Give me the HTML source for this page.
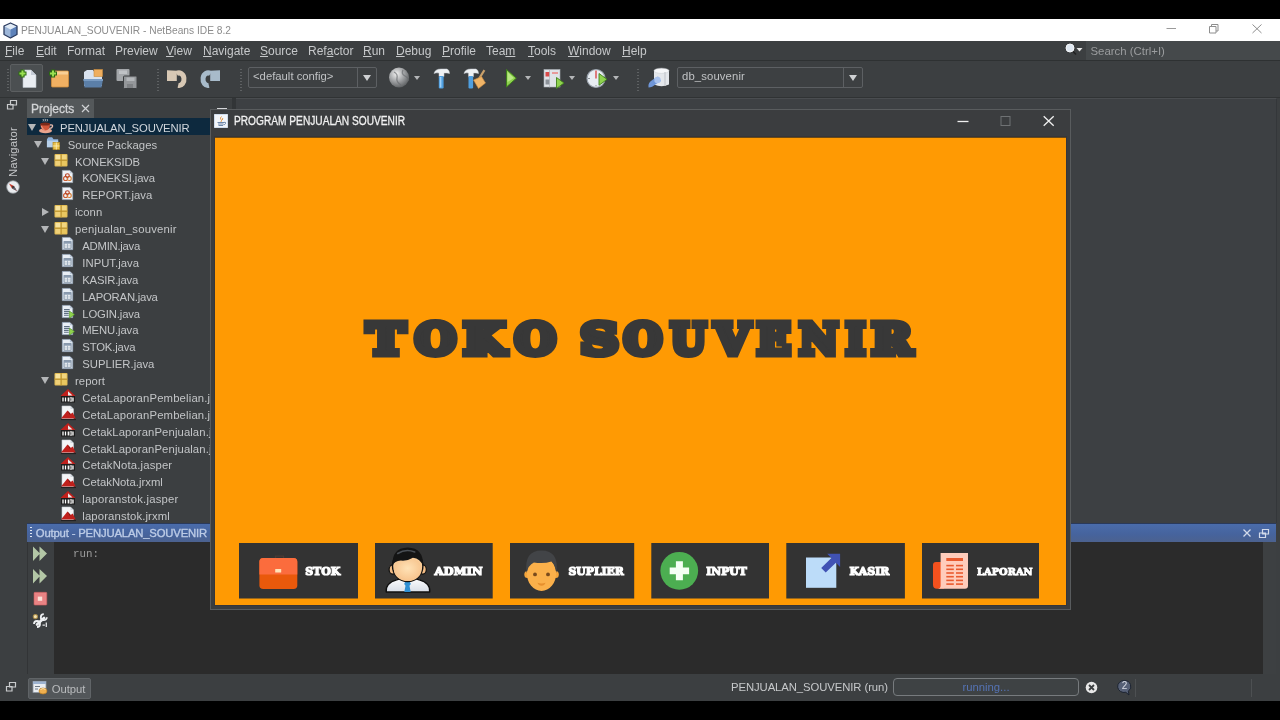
<!DOCTYPE html>
<html lang="id">
<head>
<meta charset="utf-8">
<title>PENJUALAN_SOUVENIR - NetBeans IDE 8.2</title>
<style>
*{box-sizing:border-box;margin:0;padding:0}
html,body{width:1280px;height:720px;overflow:hidden;background:#000}
body{position:relative;font-family:"Liberation Sans",sans-serif;font-size:12px;color:#bbbdbf}
.abs{position:absolute}
svg{position:absolute;overflow:visible}
#ide{left:0;top:19px;width:1280px;height:682px;background:#3c3f41}
#wtitle{left:0;top:19px;width:1280px;height:22px;background:#fff;color:#8c8c8c;font-size:11.5px;line-height:22px}
#wtitle .t{left:21px;top:-.5px;white-space:nowrap;font-size:11.3px;transform-origin:0 50%;transform:scaleX(.904)}
#menubar{left:0;top:41px;width:1280px;height:20px;background:#3c3f41;color:#c6c8ca;font-size:12px;line-height:19px;border-bottom:1px solid #2e3132}
#menubar span{position:absolute;top:1px;white-space:nowrap}
#menubar u{text-decoration-thickness:1px;text-underline-offset:1px}
#search{left:1086px;top:41px;width:194px;height:19px;background:#45494b;color:#9b9d9f;font-size:11.4px;line-height:21px;padding-left:4.5px}
#toolbar{left:0;top:61px;width:1280px;height:37px;background:#3c3f41;border-bottom:1px solid #303334}
.combo{position:absolute;height:21px;border:1px solid #5d6063;border-radius:2px;background:#3d4042;color:#c0c2c4;font-size:11.3px;line-height:17.500px;padding-left:4px;white-space:nowrap}
.combo i{position:absolute;right:0;top:0;width:19px;height:19px;border-left:1px solid #5d6063}
.combo i:after{content:"";position:absolute;left:5px;top:7px;border:4px solid transparent;border-top:6px solid #cfd1d3;border-bottom:0}
.dd{position:absolute;width:0;height:0;border:3px solid transparent;border-top:4px solid #b4b6b8;border-bottom:0}
.grip{position:absolute;width:2px;height:23px;background:repeating-linear-gradient(to bottom,#5e6163 0 1px,transparent 1px 3px)}
.tri-d{position:absolute;width:0;height:0;border:4.5px solid transparent;border-top:7px solid #b4b6b8;border-bottom:0}
.tri-r{position:absolute;width:0;height:0;border:4.5px solid transparent;border-left:7px solid #b4b6b8;border-right:0}
#tree{left:27px;top:118px;width:185px;height:406px;background:#3c3f41;overflow:hidden;color:#c3c5c7;font-size:11.3px}
.row{position:absolute;left:0;height:17px;line-height:17px;white-space:nowrap;width:185px}
.row span{position:absolute;top:1.7px}
.row svg{top:0}
#status{left:0;top:674px;width:1280px;height:27px;background:#3c3f41;color:#c4c6c8;font-size:12px}
</style>
</head>
<body>
<div id="wrap" class="abs" style="left:0;top:0;width:1280px;height:720px;will-change:transform">
<div id="ide" class="abs"></div>
<div id="wtitle" class="abs">
  <svg style="left:3px;top:3px" width="15" height="17" viewBox="0 0 15 17"><path d="M7.5 1 L14 4 V12.5 L7.5 16 L1 12.5 V4 Z" fill="#9db6d8"/><path d="M7.5 7.4 L14 4 V12.5 L7.5 16 Z" fill="#5d82ba"/><path d="M7.5 7.4 L1 4 L7.5 1 L14 4 Z" fill="#e1ebf6"/><path d="M7.5 1 L14 4 V12.5 L7.5 16 L1 12.5 V4 Z" fill="none" stroke="#2c3c60" stroke-width="1.3" stroke-linejoin="round"/></svg>
  <span class="abs t">PENJUALAN_SOUVENIR - NetBeans IDE 8.2</span>
  <svg style="left:1160px;top:0" width="110" height="22" viewBox="1160 19 110 22"><path d="M1166.5 28.5H1176" stroke="#9a9a9a" stroke-width="1" fill="none"/><path d="M1209.5 26.5h6.5v6.5h-6.5zM1211.5 26.5v-2h6.5v6.5h-2" stroke="#8e8e8e" stroke-width="1" fill="none"/><path d="M1252.5 24.5l9 8.5M1261.5 24.5l-9 8.5" stroke="#8e8e8e" stroke-width="1" fill="none"/></svg>
</div>
<div id="menubar" class="abs">
  <span style="left:5px"><u>F</u>ile</span>
  <span style="left:36px"><u>E</u>dit</span>
  <span style="left:67px">Format</span>
  <span style="left:115px">Preview</span>
  <span style="left:166px"><u>V</u>iew</span>
  <span style="left:203px"><u>N</u>avigate</span>
  <span style="left:260px"><u>S</u>ource</span>
  <span style="left:308px">Ref<u>a</u>ctor</span>
  <span style="left:363px"><u>R</u>un</span>
  <span style="left:396px"><u>D</u>ebug</span>
  <span style="left:442px"><u>P</u>rofile</span>
  <span style="left:486px">Tea<u>m</u></span>
  <span style="left:528px"><u>T</u>ools</span>
  <span style="left:568px"><u>W</u>indow</span>
  <span style="left:622px"><u>H</u>elp</span>
</div>
<svg style="left:1064px;top:42px" width="22" height="16" viewBox="0 0 22 16"><circle cx="6" cy="6" r="4" fill="#dfe8f2" stroke="#f4f6f8" stroke-width="1"/><path d="M9 9.5l3 3" stroke="#222" stroke-width="1.6"/><path d="M12.5 6h6l-3 3.5z" fill="#e6e6e6"/></svg>
<div id="search" class="abs">Search (Ctrl+I)</div>
<div id="toolbar" class="abs"></div>
<div class="grip" style="left:7px;top:69px"></div>
<div class="grip" style="left:157px;top:69px"></div>
<div class="grip" style="left:240px;top:69px"></div>
<div class="grip" style="left:637px;top:69px"></div>
<div class="abs" style="left:10px;top:64px;width:33px;height:28px;background:#4b4f51;border:1px solid #5c5f61;border-radius:2px"></div>
<svg style="left:0;top:61px" width="700" height="37" viewBox="0 61 700 37">
  <!-- new file -->
  <path d="M23 70h8l5 5v12.5h-13z" fill="#e9edf2" stroke="#b9c0c8" stroke-width=".6"/><path d="M31 70v5h5z" fill="#c5ccd6"/>
  <path d="M22.5 69.5v8M18.5 73.5h8" stroke="#2c6b12" stroke-width="4.2"/><path d="M22.5 70.5v6M19.500 73.5h6" stroke="#9be052" stroke-width="2"/>
  <!-- new project -->
  <rect x="51.5" y="71" width="17" height="16" rx="1" fill="#f0b062" stroke="#d18f3e" stroke-width=".8"/><rect x="52" y="71.500" width="16" height="3" fill="#f8cf95"/>
  <path d="M53 69.500v8M49 73.500h8" stroke="#2c6b12" stroke-width="4.2"/><path d="M53 70.500v6M50 73.500h6" stroke="#9be052" stroke-width="2"/>
  <!-- open project -->
  <path d="M84 72l3-2h6l2 3h7v13h-18z" fill="#d9e2ee"/><rect x="94" y="69.500" width="8.5" height="7" fill="#efae5e" stroke="#c98c3f" stroke-width=".6"/>
  <path d="M83.500 79h19.500l-1.500 8.500h-17z" fill="#5b7fa8"/><path d="M83.500 79h19.500v2h-19.500z" fill="#7a9cc3"/>
  <!-- save all -->
  <rect x="116.500" y="69" width="13" height="12" rx="1" fill="#a4a7aa"/><rect x="119" y="70.500" width="8" height="3.500" fill="#bfc2c5"/>
  <rect x="123.500" y="76" width="13.500" height="12.500" rx="1" fill="#94979a" stroke="#3c3f41" stroke-width="1"/><rect x="126.500" y="77.500" width="8" height="3.500" fill="#b4b7ba"/><rect x="127" y="84" width="6" height="4" fill="#7e8184"/>
  <!-- undo -->
  <path d="M176.500 73.740A5 6.300 0 1 1 178.130 85.400" fill="none" stroke="#d8c8b4" stroke-width="5"/><path d="M167 70.300l9.800 .5v10.200h-9.800z" fill="#d8c8b4"/>
  <!-- redo -->
  <path d="M210.500 73.740A5 6.300 0 1 0 208.870 85.400" fill="none" stroke="#a8bbca" stroke-width="5"/><path d="M220 70.300l-9.800 .5v10.200h9.800z" fill="#a8bbca"/>
  <!-- globe -->
  <defs><radialGradient id="gl" cx=".38" cy=".32" r=".75"><stop offset="0" stop-color="#f2f2f2"/><stop offset=".45" stop-color="#a9abad"/><stop offset="1" stop-color="#55585a"/></radialGradient></defs>
  <circle cx="399" cy="77.500" r="10" fill="url(#gl)"/><path d="M394 72q4 2 3 6t4 7M403 70q-2 4 2 6t3 5" stroke="#6b6e70" stroke-width="1.300" fill="none" opacity=".7"/>
  <!-- hammer -->
  <path d="M434 73.500q1-4.500 7-4.500h6q2.500 1 2.500 4.500l-2.500-.5h-3v3.500h-5v-3.500q-3-.5-5 .5z" fill="#eef1f4" stroke="#c9ced4" stroke-width=".5"/><rect x="438.800" y="76" width="4.800" height="12.500" rx="1.200" fill="#4f9fe0"/><rect x="439.800" y="77" width="1.600" height="10.500" fill="#9fd0f7"/>
  <!-- clean and build -->
  <path d="M464 73.500q1-4.500 7-4.500h5q2.500 1 2.500 4.500l-2.500-.5h-2.500v3.500h-5v-3.500q-2.500-.5-4.500 .5z" fill="#eef1f4" stroke="#c9ced4" stroke-width=".5"/><rect x="468.500" y="76" width="4.600" height="12.500" rx="1.200" fill="#4f9fe0"/>
  <path d="M483.500 69.500l1.800 1.200-5 8-1.800-1.200z" fill="#c9a06a"/><path d="M473.500 80l8-3.500 4 6.500-7 5.500z" fill="#f0b467" stroke="#c98c3f" stroke-width=".6"/>
  <!-- run -->
  <path d="M506.500 69.500l9.800 8.700-9.800 8.800z" fill="#8fd24e" stroke="#3f7f1c" stroke-width="1"/><path d="M507.500 72l6.500 6-6.500 4z" fill="#c3ee92" opacity=".8"/>
  <!-- debug -->
  <rect x="544" y="69.500" width="16" height="17.500" fill="#dfe3e8" stroke="#a9afb6" stroke-width=".6"/><rect x="545.500" y="72" width="4" height="4.500" fill="#d94a4a"/><rect x="552" y="72" width="6" height="2" fill="#e79a9a"/><rect x="545.500" y="79.500" width="4" height="5" fill="#8c9299"/><path d="M549.500 69.500v18" stroke="#a9afb6" stroke-width=".6"/>
  <path d="M556.500 77.500l7.500 5.500-7.500 5.500z" fill="#8fd24e" stroke="#3f7f1c" stroke-width=".9"/>
  <!-- profile -->
  <circle cx="596" cy="78.500" r="9" fill="#e8edf2" stroke="#9aa3ad" stroke-width="1.200"/><path d="M596 70.500v8" stroke="#d94a4a" stroke-width="1.400"/><path d="M588 78.500h2M596 86.500v-1.500" stroke="#8c9299" stroke-width="1"/>
  <path d="M599 73.500l8 5.800-8 6z" fill="#8fd24e" stroke="#3f7f1c" stroke-width=".9"/>
  <!-- db -->
  <path d="M654 70.500q7.500-3.500 15 0v14q-7.500 3.500-15 0z" fill="#e4e7eb"/><ellipse cx="661.500" cy="70.800" rx="7.500" ry="2.600" fill="#f6f7f9" stroke="#c4c8cd" stroke-width=".5"/><path d="M665 72v14" stroke="#c9cdd2" stroke-width="2" opacity=".7"/>
  <path d="M648.500 87.500q-1-5 4.500-8l5-3 3 4.500-5 3q-4 3.500-7.500 3.500z" fill="#6f96d8"/><circle cx="657.500" cy="80" r="3.200" fill="#a9c3ee"/>
</svg>
<div class="combo" style="left:248px;top:67px;width:129px">&lt;default config&gt;<i></i></div>
<div class="combo" style="left:677px;top:67px;width:186px;letter-spacing:.13px">db_souvenir<i></i></div>
<div class="dd" style="left:414px;top:76px"></div>
<div class="dd" style="left:525px;top:76px"></div>
<div class="dd" style="left:569px;top:76px"></div>
<div class="dd" style="left:613px;top:76px"></div>
<svg width="0" height="0" style="left:0;top:0"><defs>
<symbol id="i-proj" viewBox="0 0 16 16"><path d="M5 1q1 1.200 0 2.400M7 .8q1 1.200 0 2.600M9 1q1 1.200 0 2.400" stroke="#d8d8d8" stroke-width=".8" fill="none"/><ellipse cx="7.500" cy="12.800" rx="6.500" ry="2.500" fill="#e8a58f"/><path d="M2.500 6h9.500q0 6-4.800 6.500q-4.700-.5-4.700-6.500z" fill="#d2573a"/><ellipse cx="7.200" cy="6" rx="4.800" ry="1.500" fill="#7a2a1a"/><path d="M12 7q3-.5 2.500 1.500t-3.300 1.800" stroke="#e7bcae" stroke-width="1.300" fill="none"/><path d="M3.500 8q.5 3 3 3.800" stroke="#f1a48f" stroke-width="1" fill="none"/></symbol>
<symbol id="i-src" viewBox="0 0 16 16"><path d="M1 4.500l1.500-2h4l1.500 2h5v8.500h-12z" fill="#8fb3dc"/><path d="M1 6h12v7h-12z" fill="#b7d0ea"/><rect x="7.500" y="8" width="7" height="7.500" fill="#e9c04c" stroke="#b98e1f" stroke-width=".8"/><path d="M11 8v7.500M7.500 11.700h7" stroke="#fdf0b8" stroke-width=".9"/></symbol>
<symbol id="i-pkg" viewBox="0 0 16 16"><rect x="1.500" y="2" width="13" height="12.500" rx="1" fill="#e3bd55"/><rect x="2.500" y="3" width="5" height="4.500" fill="#f7e3a0"/><rect x="8.800" y="3" width="4.700" height="4.500" fill="#f1d57f"/><rect x="2.500" y="9" width="5" height="4.500" fill="#efd078"/><rect x="8.800" y="9" width="4.700" height="4.500" fill="#e9c760"/><path d="M8.100 2v12.500M1.500 8.200h13" stroke="#b88f2a" stroke-width="1"/></symbol>
<symbol id="i-jcls" viewBox="0 0 16 16"><path d="M2.500 1.500h8l3 3v10h-11z" fill="#eef2f7" stroke="#aab4c0" stroke-width=".7"/><path d="M10.500 1.500v3h3z" fill="#c3ccd8"/><circle cx="6" cy="10" r="2.200" fill="none" stroke="#c95a32" stroke-width="1.200"/><circle cx="9.800" cy="10" r="2.200" fill="none" stroke="#d9823c" stroke-width="1.200"/><circle cx="7.900" cy="7" r="2" fill="none" stroke="#b8452c" stroke-width="1.200"/></symbol>
<symbol id="i-form" viewBox="0 0 16 16"><path d="M2.500 1.500h8l3 3v10h-11z" fill="#e9eff6" stroke="#9fb0c4" stroke-width=".8"/><path d="M10.500 1.500v3h3z" fill="#b9c7d8"/><rect x="4.300" y="6" width="7.500" height="7" fill="#f9fbfd" stroke="#6f8296" stroke-width=".9"/><path d="M4.300 8.300h7.500M4.300 10.600h7.500M8 8.300v4.700" stroke="#8a9bb0" stroke-width=".7"/><rect x="4.300" y="6" width="7.500" height="2" fill="#8a9bb0"/></symbol>
<symbol id="i-formrun" viewBox="0 0 16 16"><path d="M2.500 1.500h8l3 3v10h-11z" fill="#e9eff6" stroke="#9fb0c4" stroke-width=".8"/><path d="M10.500 1.500v3h3z" fill="#b9c7d8"/><path d="M4.300 6h6M4.300 8h6M4.300 10h5M4.300 12h5" stroke="#5e6f82" stroke-width="1.100"/><path d="M10 7.500l5.500 3.800-5.500 3.800z" fill="#8fd24e" stroke="#4c8c22" stroke-width=".6"/></symbol>
<symbol id="i-jasper" viewBox="0 0 16 16"><path d="M8 1l7.500 7h-15z" fill="#c0201c"/><path d="M8 3.200l4.500 4.300h-4.500z" fill="#e9e9e9"/><rect x="1" y="8" width="14" height="6.500" fill="#1b1b1b"/><path d="M3 9.500v4M5.500 9.500v4M8.300 9.500v4M13 9.500v4" stroke="#fff" stroke-width="1.300"/><rect x="10" y="9.800" width="1.800" height="3.400" fill="none" stroke="#fff" stroke-width=".8"/></symbol>
<symbol id="i-jrxml" viewBox="0 0 16 16"><path d="M2 1h8.500l3 3v10.500h-11.500z" fill="#f4f5f7" stroke="#c7ccd3" stroke-width=".6"/><path d="M10.500 1v3h3z" fill="#cfd5dd"/><path d="M1 13.500l6.500-8 3.200 3.500 2-1.500 3 6z" fill="#c0201c"/><path d="M7.500 5.500l3.200 3.500-1 .8z" fill="#7d1411"/><path d="M1 14.500h15" stroke="#222" stroke-width="1.200"/></symbol>
</defs></svg>
<!-- left slide bar -->
<svg style="left:5px;top:99px" width="14" height="12" viewBox="0 0 14 12"><path d="M5.500 1.500h6v4.500h-6zM2.500 5.500h5.500v4.500h-5.500z" fill="#3c3f41" stroke="#c9cbcd" stroke-width="1.200"/></svg>
<div class="abs" style="left:5px;top:176.800px;width:60px;height:16px;line-height:16px;font-size:11.300px;letter-spacing:.18px;color:#c3c5c7;transform-origin:0 0;transform:rotate(-90deg);white-space:nowrap">Navigator</div>
<svg style="left:6px;top:180px" width="14" height="14" viewBox="0 0 14 14"><circle cx="7" cy="7" r="6.300" fill="#e9ecef" stroke="#8f959b" stroke-width=".8"/><path d="M3 3.500l5 2.500 3 5-5-2.500z" fill="#c0392b"/><path d="M8 6l3 5-5-2.500z" fill="#5a6570"/><circle cx="7" cy="7" r="1" fill="#333"/></svg>
<!-- projects tab -->
<div class="abs" style="left:27px;top:98px;width:206px;height:20px;background:#3c3f41;border-top:1px solid #45484a"></div>
<div class="abs" style="left:27px;top:99px;width:67px;height:19px;background:#54585a;color:#cfd1d3;font-size:12px;line-height:21px;padding-left:4px;white-space:nowrap"><span style="-webkit-text-stroke:.3px #d3d5d7">Projects</span><svg style="left:54px;top:5px" width="9" height="9" viewBox="0 0 9 9"><path d="M1 1l7 7M8 1l-7 7" stroke="#d0d2d4" stroke-width="1.200"/></svg></div>
<div class="abs" style="left:217px;top:107.600px;width:10px;height:1.200px;background:#d4d6d8"></div>
<div class="abs" style="left:232px;top:98px;width:4px;height:426px;background:#323537"></div>
<div id="tree" class="abs">
<div class="row" style="top:0.2px;background:#0d293e;color:#d0d6dc"><i class="tri-d" style="left:1px;top:6px"></i><svg style="left:11.0px" width="16" height="16"><use href="#i-proj" width="16" height="16"/></svg><span style="left:33.0px;letter-spacing:-0.125px">PENJUALAN_SOUVENIR</span></div>
<div class="row" style="top:17.1px"><i class="tri-d" style="left:7px;top:6px"></i><svg style="left:18.5px" width="15" height="15"><use href="#i-src" width="15" height="15"/></svg><span style="left:40.7px;letter-spacing:0.070px">Source Packages</span></div>
<div class="row" style="top:34.0px"><i class="tri-d" style="left:14px;top:6px"></i><svg style="left:26.0px" width="16" height="16"><use href="#i-pkg" width="16" height="16"/></svg><span style="left:48.0px;letter-spacing:-0.100px">KONEKSIDB</span></div>
<div class="row" style="top:50.8px"><svg style="left:33.0px" width="15" height="15"><use href="#i-jcls" width="15" height="15"/></svg><span style="left:55.3px;letter-spacing:-0.116px">KONEKSI.java</span></div>
<div class="row" style="top:67.7px"><svg style="left:33.0px" width="15" height="15"><use href="#i-jcls" width="15" height="15"/></svg><span style="left:55.3px;letter-spacing:0.047px">REPORT.java</span></div>
<div class="row" style="top:84.6px"><i class="tri-r" style="left:15px;top:5px"></i><svg style="left:26.0px" width="16" height="16"><use href="#i-pkg" width="16" height="16"/></svg><span style="left:48.0px;letter-spacing:0.057px">iconn</span></div>
<div class="row" style="top:101.5px"><i class="tri-d" style="left:14px;top:6px"></i><svg style="left:26.0px" width="16" height="16"><use href="#i-pkg" width="16" height="16"/></svg><span style="left:48.0px;letter-spacing:0.206px">penjualan_souvenir</span></div>
<div class="row" style="top:118.4px"><svg style="left:33.0px" width="15" height="15"><use href="#i-form" width="15" height="15"/></svg><span style="left:55.3px;letter-spacing:-0.257px">ADMIN.java</span></div>
<div class="row" style="top:135.2px"><svg style="left:33.0px" width="15" height="15"><use href="#i-form" width="15" height="15"/></svg><span style="left:55.3px;letter-spacing:0.018px">INPUT.java</span></div>
<div class="row" style="top:152.1px"><svg style="left:33.0px" width="15" height="15"><use href="#i-form" width="15" height="15"/></svg><span style="left:55.3px;letter-spacing:-0.207px">KASIR.java</span></div>
<div class="row" style="top:169.0px"><svg style="left:33.0px" width="15" height="15"><use href="#i-form" width="15" height="15"/></svg><span style="left:55.3px;letter-spacing:-0.205px">LAPORAN.java</span></div>
<div class="row" style="top:185.9px"><svg style="left:33.0px" width="15" height="15"><use href="#i-formrun" width="15" height="15"/></svg><span style="left:55.3px;letter-spacing:-0.133px">LOGIN.java</span></div>
<div class="row" style="top:202.8px"><svg style="left:33.0px" width="15" height="15"><use href="#i-formrun" width="15" height="15"/></svg><span style="left:55.3px;letter-spacing:-0.125px">MENU.java</span></div>
<div class="row" style="top:219.6px"><svg style="left:33.0px" width="15" height="15"><use href="#i-form" width="15" height="15"/></svg><span style="left:55.3px;letter-spacing:-0.158px">STOK.java</span></div>
<div class="row" style="top:236.5px"><svg style="left:33.0px" width="15" height="15"><use href="#i-form" width="15" height="15"/></svg><span style="left:55.3px;letter-spacing:-0.018px">SUPLIER.java</span></div>
<div class="row" style="top:253.4px"><i class="tri-d" style="left:14px;top:6px"></i><svg style="left:26.0px" width="16" height="16"><use href="#i-pkg" width="16" height="16"/></svg><span style="left:48.0px;letter-spacing:0.081px">report</span></div>
<div class="row" style="top:270.3px"><svg style="left:33.0px" width="16" height="16"><use href="#i-jasper" width="16" height="16"/></svg><span style="left:55.3px;letter-spacing:0.165px">CetaLaporanPembelian.jasper</span></div>
<div class="row" style="top:287.2px"><svg style="left:33.0px" width="16" height="16"><use href="#i-jrxml" width="16" height="16"/></svg><span style="left:55.3px;letter-spacing:0.165px">CetaLaporanPembelian.jrxml</span></div>
<div class="row" style="top:304.0px"><svg style="left:33.0px" width="16" height="16"><use href="#i-jasper" width="16" height="16"/></svg><span style="left:55.3px;letter-spacing:0.101px">CetakLaporanPenjualan.jasper</span></div>
<div class="row" style="top:320.9px"><svg style="left:33.0px" width="16" height="16"><use href="#i-jrxml" width="16" height="16"/></svg><span style="left:55.3px;letter-spacing:0.101px">CetakLaporanPenjualan.jrxml</span></div>
<div class="row" style="top:337.8px"><svg style="left:33.0px" width="16" height="16"><use href="#i-jasper" width="16" height="16"/></svg><span style="left:55.3px;letter-spacing:0.170px">CetakNota.jasper</span></div>
<div class="row" style="top:354.7px"><svg style="left:33.0px" width="16" height="16"><use href="#i-jrxml" width="16" height="16"/></svg><span style="left:55.3px;letter-spacing:0.016px">CetakNota.jrxml</span></div>
<div class="row" style="top:371.6px"><svg style="left:33.0px" width="16" height="16"><use href="#i-jasper" width="16" height="16"/></svg><span style="left:55.3px;letter-spacing:0.216px">laporanstok.jasper</span></div>
<div class="row" style="top:388.4px"><svg style="left:33.0px" width="16" height="16"><use href="#i-jrxml" width="16" height="16"/></svg><span style="left:55.3px;letter-spacing:0.136px">laporanstok.jrxml</span></div>
</div>
<!-- editor area -->
<div class="abs" style="left:236px;top:98px;width:1041px;height:425px;background:#3d4043;border-top:1px solid #4a4d50;border-right:1px solid #34373a"></div>
<!-- output -->
<div class="abs" style="left:27px;top:523px;width:1249px;height:19px;background:linear-gradient(#4a6cab 0%,#46639c 60%,#4c628f 100%);border-top:1px solid #2a3a5c"></div>
<div class="abs" style="left:30px;top:527px;width:2px;height:12px;background:repeating-linear-gradient(to bottom,#dfe6f2 0 1px,transparent 1px 3px)"></div>
<div class="abs" style="left:35.800px;top:524px;height:18px;line-height:18px;font-size:11.300px;color:#bccbe6;white-space:nowrap;-webkit-text-stroke:.35px #bccbe6;letter-spacing:-.17px">Output - PENJUALAN_SOUVENIR</div>
<svg style="left:1240px;top:526px" width="32" height="14" viewBox="1240 526 32 14"><path d="M1243.500 529.500l7 7M1250.500 529.500l-7 7" stroke="#d2daea" stroke-width="1.300"/><path d="M1262.500 529.500h6v4.500h-6zM1259.500 533h6v4.500h-6z" fill="#4562a0" stroke="#d2daea" stroke-width="1.200"/></svg>
<div class="abs" style="left:27px;top:542px;width:1249px;height:132px;background:#2b2b2b"></div>
<div class="abs" style="left:27px;top:542px;width:27px;height:132px;background:#3c3f41;border-left:1px solid #323436"></div>
<div class="abs" style="left:1263px;top:542px;width:13px;height:132px;background:#3d4042"></div>
<svg style="left:27px;top:542px" width="28" height="92" viewBox="27 542 28 92">
  <path d="M33 546.500l7 7-7 7.500zM39.500 546.500l7.500 7-7.500 7.500z" fill="#b3c7a6"/>
  <path d="M33 569l7 7-7 7.500zM39.500 569l7.500 7-7.500 7.500z" fill="#b3c7a6"/>
  <rect x="34" y="592.300" width="12.800" height="12.800" rx=".8" fill="#e98384" stroke="#c95a5c" stroke-width=".6"/><rect x="37.800" y="596.600" width="4.400" height="4.200" fill="#fbe0d8"/>
  <path d="M37 624.500l7-6.500" stroke="#eef0f2" stroke-width="2.600" stroke-linecap="round"/>
  <path d="M46.800 617.200a3 3 0 1 1-3-3" fill="none" stroke="#eef0f2" stroke-width="1.800"/>
  <path d="M34 624a3 3 0 1 1 3 3" fill="none" stroke="#eef0f2" stroke-width="1.800"/>
  <circle cx="35.400" cy="616.600" r="2.100" fill="#f3e2b0" stroke="#a88b4a" stroke-width="1.100"/>
  <path d="M42.500 625.200h2.400M46.300 622.500v4.500" stroke="#e4e6e8" stroke-width="1.300"/>
</svg>
<div class="abs" style="left:73px;top:546px;height:16px;line-height:16px;font-family:'Liberation Mono',monospace;font-size:10.800px;color:#9c9c9c;white-space:nowrap">run:</div>
<!-- status bar -->
<div id="status" class="abs"></div>
<svg style="left:4px;top:681px" width="14" height="12" viewBox="0 0 14 12"><path d="M5.500 1.500h6v4.500h-6zM2.500 5.500h5.500v4.500h-5.500z" fill="#3c3f41" stroke="#c9cbcd" stroke-width="1.200"/></svg>
<div class="abs" style="left:28px;top:678px;width:63px;height:21px;background:#53575a;border:1px solid #606467;border-radius:2px"></div>
<svg style="left:32px;top:680px" width="16" height="16" viewBox="0 0 16 16"><rect x="1" y="1.500" width="13" height="11" fill="#e9edf2" stroke="#8d96a1" stroke-width=".8"/><rect x="1" y="1.500" width="13" height="2.500" fill="#9db3d1"/><path d="M3 6.500h5M3 9h3" stroke="#6f7a87" stroke-width="1"/><ellipse cx="11" cy="11" rx="4" ry="3" fill="#f0b04f" stroke="#b97d22" stroke-width=".7"/><path d="M8.500 9.500q2.500-2 5 0" stroke="#fbe2b0" stroke-width="1" fill="none"/></svg>
<div class="abs" style="left:51.800px;top:680.500px;height:17px;line-height:17px;font-size:11.300px;color:#b9bbbd;white-space:nowrap;letter-spacing:-.07px">Output</div>
<div class="abs" style="left:731px;top:678px;height:18px;line-height:18px;font-size:11.300px;color:#c6c8ca;white-space:nowrap;letter-spacing:-.08px">PENJUALAN_SOUVENIR (run)</div>
<div class="abs" style="left:893px;top:678px;width:186px;height:18px;border:1px solid #777b7e;border-radius:4px;background:#3e4244;text-align:center;line-height:16px;font-size:11.300px;color:#5573b4">running...</div>
<svg style="left:1085px;top:681px" width="13" height="13" viewBox="0 0 13 13"><circle cx="6.500" cy="6.500" r="5.800" fill="#e8e8e8"/><path d="M4 4l5 5M9 4l-5 5" stroke="#3c3f41" stroke-width="1.800"/></svg>
<svg style="left:1116px;top:679px" width="17" height="17" viewBox="0 0 17 17"><path d="M8.300 1.500a6.500 6 0 1 0 1.500 11.800l3.200 2.700-.6-3.800a6.500 6 0 0 0-4.100-10.700z" fill="#566076" stroke="#1c2330" stroke-width="1"/></svg>
<div class="abs" style="left:1116px;top:679px;width:17px;height:14px;line-height:14px;text-align:center;font-size:10px;color:#d9dde6">2</div>
<div class="abs" style="left:1135px;top:679px;width:1px;height:18px;background:#4d5052"></div>
<div class="abs" style="left:1251px;top:679px;width:1px;height:18px;background:#4d5052"></div>
<!-- application window -->
<div class="abs" style="left:210px;top:109px;width:861px;height:501px;background:#3b3d3f;border:1px solid #595c5e"></div>
<div class="abs" style="left:214px;top:136px;width:853px;height:470px;background:#36363a"></div>
<svg style="left:214px;top:114px" width="14" height="14" viewBox="0 0 14 14"><rect width="14" height="14" rx="1" fill="#f3f6fa"/><rect x=".5" y=".5" width="13" height="13" rx="1" fill="none" stroke="#cfdcec" stroke-width="1"/><path d="M7.500 2.500q-2 1.500-.5 3t-.3 2.500M9 4q-1.200 1 -.3 2" stroke="#e0903a" stroke-width=".9" fill="none"/><path d="M3.500 8.500h6.500M4 10h5.500M4.500 11.500h4.500" stroke="#4a6a94" stroke-width=".8"/><path d="M10 8.300q2.200-.3 1.500 1.200t-2 1.300" stroke="#4a6a94" stroke-width=".8" fill="none"/></svg>
<div class="abs" style="left:233.700px;top:111.500px;height:18px;line-height:18px;font-size:12.500px;color:#f1f1f1;white-space:nowrap;transform-origin:0 50%;transform:scaleX(.813);-webkit-text-stroke:.3px #f1f1f1">PROGRAM PENJUALAN SOUVENIR</div>
<svg style="left:950px;top:110px" width="115" height="26" viewBox="950 110 115 26"><path d="M957.500 121.500h11" stroke="#f0f0f0" stroke-width="1.300"/><rect x="1001" y="116.500" width="9" height="9" fill="none" stroke="#6f7274" stroke-width="1"/><path d="M1043.700 116.200l10 9.600M1053.700 116.200l-10 9.600" stroke="#f0f0f0" stroke-width="1.300"/></svg>
<svg style="left:215px;top:137px" width="851" height="468" viewBox="215 137 851 468">
<rect x="215" y="137" width="851" height="1" fill="#6b4a16"/>
<rect x="215" y="138" width="851" height="467" fill="#ff9a03"/>
<text y="354.4" font-family="DejaVu Serif, Liberation Serif, serif" font-weight="bold" font-size="43.5" fill="#383838" stroke="#383838" stroke-width="7.0" stroke-linejoin="miter" stroke-miterlimit="4"><tspan x="367.1" textLength="37.90" lengthAdjust="spacingAndGlyphs">T</tspan><tspan x="415.1" textLength="40.93" lengthAdjust="spacingAndGlyphs">O</tspan><tspan x="463.6" textLength="41.57" lengthAdjust="spacingAndGlyphs">K</tspan><tspan x="514.7" textLength="40.93" lengthAdjust="spacingAndGlyphs">O</tspan><tspan x="565.0"> </tspan><tspan x="580.5" textLength="37.96" lengthAdjust="spacingAndGlyphs">S</tspan><tspan x="623.7" textLength="38.17" lengthAdjust="spacingAndGlyphs">O</tspan><tspan x="670.6" textLength="35.53" lengthAdjust="spacingAndGlyphs">U</tspan><tspan x="714.8" textLength="35.11" lengthAdjust="spacingAndGlyphs">V</tspan><tspan x="756.9" textLength="33.54" lengthAdjust="spacingAndGlyphs">E</tspan><tspan x="799.2" textLength="38.92" lengthAdjust="spacingAndGlyphs">N</tspan><tspan x="845.8" textLength="19.46" lengthAdjust="spacingAndGlyphs">I</tspan><tspan x="871.8" textLength="40.37" lengthAdjust="spacingAndGlyphs">R</tspan></text>
<g fill="#333333">
<rect x="239" y="543" width="119" height="55.500"/><rect x="375" y="543" width="117.700" height="55.500"/><rect x="510" y="543" width="124.200" height="55.500"/><rect x="651.300" y="543" width="117.700" height="55.500"/><rect x="786.300" y="543" width="118.600" height="55.500"/><rect x="922" y="543" width="117" height="55.500"/>
</g>
<g font-family="DejaVu Serif, Liberation Serif, serif" font-weight="bold" fill="#ffffff" stroke="#ffffff" stroke-linejoin="miter">
<text x="305.2" y="575.3" font-size="11.39" stroke-width="1.2" textLength="35.2" lengthAdjust="spacingAndGlyphs">STOK</text>
<text x="434.6" y="575.3" font-size="11.39" stroke-width="1.2" textLength="47.9" lengthAdjust="spacingAndGlyphs">ADMIN</text>
<text x="568.5" y="575.3" font-size="11.39" stroke-width="1.2" textLength="55.3" lengthAdjust="spacingAndGlyphs">SUPLIER</text>
<text x="706.2" y="575.3" font-size="11.39" stroke-width="1.2" textLength="40.7" lengthAdjust="spacingAndGlyphs">INPUT</text>
<text x="849.6" y="575.3" font-size="11.39" stroke-width="1.2" textLength="39.8" lengthAdjust="spacingAndGlyphs">KASIR</text>
<text x="977.1" y="575.1" font-size="9.19" stroke-width="0.9" textLength="55.5" lengthAdjust="spacingAndGlyphs">LAPORAN</text>
</g>
<!--ICONS-->
<!-- stok -->
<path d="M275.500 558v-1.800h8v1.800" fill="none" stroke="#4a3a34" stroke-width="1.200"/>
<rect x="259.400" y="558" width="37.900" height="31" rx="3.800" fill="#e9590b"/>
<path d="M259.400 574.400v-12.600a3.800 3.800 0 0 1 3.800-3.800h30.300a3.800 3.800 0 0 1 3.800 3.800v12.600z" fill="#fb6c3d"/>
<rect x="275.200" y="569" width="6" height="3.600" rx=".5" fill="#ffe3b8"/>
<!-- admin -->
<defs><radialGradient id="fc" cx=".5" cy=".45" r=".6"><stop offset="0" stop-color="#ffe2b6"/><stop offset="1" stop-color="#f6c088"/></radialGradient>
<linearGradient id="sh" x1="0" y1="0" x2="0" y2="1"><stop offset="0" stop-color="#ffffff"/><stop offset="1" stop-color="#d7dde6"/></linearGradient></defs>
<path d="M386.200 592q-1-9 10.500-12.200l6.500-2h9.500l6.500 2q11.500 3.200 10.500 12.200z" fill="url(#sh)" stroke="#101010" stroke-width="1.400" stroke-linejoin="round"/>
<path d="M405 582h5l.8 2-1.300 1.800 1.200 6.200h-6.400l1.200-6.200-1.300-1.800z" fill="#2f8fd2"/>
<g transform="translate(.7 0)"><ellipse cx="392" cy="569.500" rx="3.600" ry="4.600" fill="#f3bd86" stroke="#101010" stroke-width="1.200"/><ellipse cx="422" cy="569.500" rx="3.600" ry="4.600" fill="#f3bd86" stroke="#101010" stroke-width="1.200"/>
<ellipse cx="407" cy="566" rx="15.200" ry="15.600" fill="#f9cc98" stroke="#101010" stroke-width="1.400"/>
<ellipse cx="407" cy="569.500" rx="13.800" ry="11.600" fill="url(#fc)"/>
<path d="M391.800 566q-1-18 15.200-18.400q16.200 .4 15.200 18.400q-2.500-7.500-10-8.200q-5.200 3.400-12 2.800q-6.400 .2-8.400 5.400z" fill="#141414"/>
<path d="M397 553.500q8-5 17-1.500" stroke="#4a4f55" stroke-width="1.600" fill="none" stroke-linecap="round"/>
</g>
<!-- suplier -->
<ellipse cx="527.300" cy="574.500" rx="3" ry="3.600" fill="#f5a53b"/><ellipse cx="555.800" cy="574.500" rx="3" ry="3.600" fill="#f5a53b"/>
<ellipse cx="541.500" cy="573.500" rx="14.600" ry="17.500" fill="#fbb04a"/>
<path d="M526.600 573q-3-22.500 14.900-22.500q17.900 0 14.900 22.500q-1.200-7.800-5-11.500q-7.500 2.500-17.500 1q-5.800 2.800-7.300 10.500z" fill="#424447"/>
<circle cx="535" cy="574.400" r="1.900" fill="#7a4a1c"/><circle cx="548" cy="574.400" r="1.900" fill="#7a4a1c"/>
<path d="M537.500 582.800q4 1.500 8 0q-1 3-4 3t-4-3z" fill="#e78f2d"/>
<!-- input -->
<circle cx="679.250" cy="570.800" r="18.900" fill="#4cae51"/>
<path d="M675.900 561.300h7v6.200h6.200v6.800h-6.200v6h-7v-6h-6.200v-6.800h6.200z" fill="#f4fff4"/>
<!-- kasir -->
<rect x="806" y="557.500" width="30.300" height="30.300" fill="#bcdcf9"/>
<path d="M827.200 553.700h12.900v13.200l-4.200-4.200-10.200 9.900-4.500-4.500 10.200-10.200z" fill="#4052b4"/>
<!-- laporan -->
<path d="M933 565a3 3 0 0 1 3-3h8v26.800h-7a4 4 0 0 1-4-4z" fill="#f4511e"/>
<path d="M940.600 553h27.400v32.800a3 3 0 0 1-3 3h-27.400a3 3 0 0 0 3-3z" fill="#ffccbb"/>
<g fill="#ea5a2e"><rect x="946.300" y="558" width="16.700" height="3"/>
<rect x="946.300" y="564.800" width="7.500" height="1.600"/><rect x="956" y="564.800" width="7" height="1.600"/>
<rect x="946.300" y="568.500" width="7.500" height="1.600"/><rect x="956" y="568.500" width="7" height="1.600"/>
<rect x="946.300" y="572.200" width="7.500" height="1.600"/><rect x="956" y="572.200" width="7" height="1.600"/>
<rect x="946.300" y="575.900" width="7.500" height="1.600"/><rect x="956" y="575.900" width="7" height="1.600"/>
<rect x="946.300" y="579.600" width="7.500" height="1.600"/><rect x="956" y="579.600" width="7" height="1.600"/>
<rect x="946.300" y="583.300" width="7.500" height="1.600"/><rect x="956" y="583.300" width="7" height="1.600"/></g>
<!--/ICONS-->
</svg>
</div></body></html>
